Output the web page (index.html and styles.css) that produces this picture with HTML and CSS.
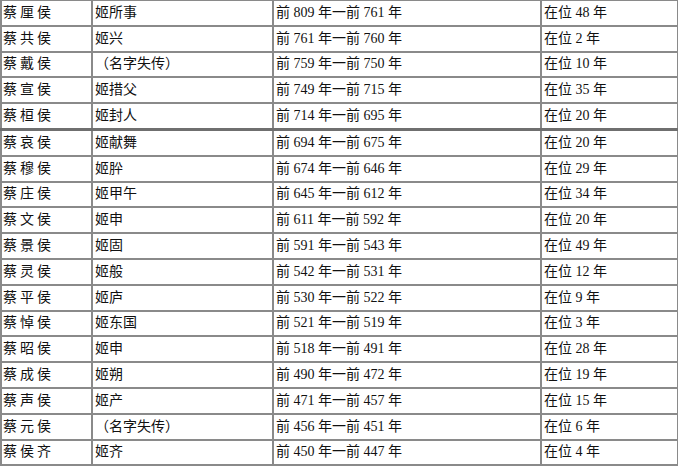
FILE: index.html
```html
<!DOCTYPE html>
<html lang="zh">
<head>
<meta charset="utf-8">
<link rel="stylesheet" href="styles.css">
</head>
<body>
<table class="rulers">
<colgroup><col class="c1"><col class="c2"><col class="c3"><col class="c4"></colgroup>
<tbody>
<tr><td class="name">蔡厘侯</td><td>姬所事</td><td>前 809 年一前 761 年</td><td>在位 48 年</td></tr>
<tr><td class="name">蔡共侯</td><td>姬兴</td><td>前 761 年一前 760 年</td><td>在位 2 年</td></tr>
<tr><td class="name">蔡戴侯</td><td>（名字失传）</td><td>前 759 年一前 750 年</td><td>在位 10 年</td></tr>
<tr><td class="name">蔡宣侯</td><td>姬措父</td><td>前 749 年一前 715 年</td><td>在位 35 年</td></tr>
<tr><td class="name">蔡桓侯</td><td>姬封人</td><td>前 714 年一前 695 年</td><td>在位 20 年</td></tr>
<tr class="brk"><td class="name">蔡哀侯</td><td>姬献舞</td><td>前 694 年一前 675 年</td><td>在位 20 年</td></tr>
<tr><td class="name">蔡穆侯</td><td>姬肸</td><td>前 674 年一前 646 年</td><td>在位 29 年</td></tr>
<tr><td class="name">蔡庄侯</td><td>姬甲午</td><td>前 645 年一前 612 年</td><td>在位 34 年</td></tr>
<tr><td class="name">蔡文侯</td><td>姬申</td><td>前 611 年一前 592 年</td><td>在位 20 年</td></tr>
<tr><td class="name">蔡景侯</td><td>姬固</td><td>前 591 年一前 543 年</td><td>在位 49 年</td></tr>
<tr><td class="name">蔡灵侯</td><td>姬般</td><td>前 542 年一前 531 年</td><td>在位 12 年</td></tr>
<tr><td class="name">蔡平侯</td><td>姬庐</td><td>前 530 年一前 522 年</td><td>在位 9 年</td></tr>
<tr><td class="name">蔡悼侯</td><td>姬东国</td><td>前 521 年一前 519 年</td><td>在位 3 年</td></tr>
<tr><td class="name">蔡昭侯</td><td>姬申</td><td>前 518 年一前 491 年</td><td>在位 28 年</td></tr>
<tr><td class="name">蔡成侯</td><td>姬朔</td><td>前 490 年一前 472 年</td><td>在位 19 年</td></tr>
<tr><td class="name">蔡声侯</td><td>姬产</td><td>前 471 年一前 457 年</td><td>在位 15 年</td></tr>
<tr><td class="name">蔡元侯</td><td>（名字失传）</td><td>前 456 年一前 451 年</td><td>在位 6 年</td></tr>
<tr><td class="name">蔡侯齐</td><td>姬齐</td><td>前 450 年一前 447 年</td><td>在位 4 年</td></tr>
</tbody>
</table>
</body>
</html>
```
FILE: styles.css
```css
html, body {
  margin: 0;
  padding: 0;
  background: #fff;
}
body {
  font-family: "Liberation Serif", "Noto Sans CJK SC", serif;
  font-size: 14px;
  color: #111;
  overflow: hidden;
}
.rulers {
  border-collapse: collapse;
  table-layout: fixed;
  width: 677px;
  margin-top: -1px;
}
.c1 { width: 91px; }
.c2 { width: 181px; }
.c3 { width: 268px; }
.c4 { width: 137px; }
.rulers td {
  border: 2px solid #8a8a8a;
  height: 23.8px;
  padding: 0 0 0 2px;
  vertical-align: middle;
  white-space: nowrap;
  line-height: 18px;
}
.rulers td.name {
  letter-spacing: 3px;
  padding-left: 1px;
}
.rulers tr.brk td {
  border-top: 3px solid #6f6f6f;
}
```
